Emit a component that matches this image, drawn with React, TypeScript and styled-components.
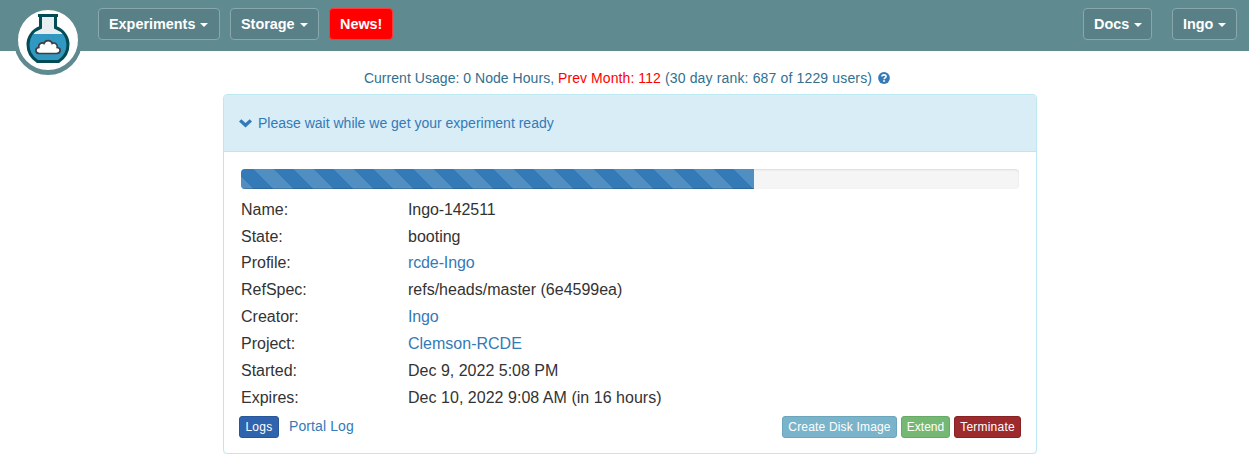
import React from 'react';
import styled, { createGlobalStyle } from 'styled-components';

const GlobalStyle = createGlobalStyle`
  * { box-sizing: border-box; }
  body {
    margin: 0;
    background: #fff;
    color: #333;
    font: 14px/20px "Liberation Sans", Arial, sans-serif;
  }
`;

const Navbar = styled.header`
  height: 51px;
  padding: 8px 12px 0 14px;
  display: flex;
  align-items: flex-start;
  background: #5f8a8f;
`;

const Brand = styled.a`
  flex: none;
  width: 68px;
  height: 68px;
  margin: -2px 16px 0 0;
  border: 4px solid #5f8a8f;
  border-radius: 50%;
  background: #fff;
  display: block;
  box-shadow: 0 1px 0 #5f8a8f;
  svg { display: block; }
`;

const NavGroup = styled.nav<{ $gap: number; $end?: boolean }>`
  display: flex;
  gap: ${p => p.$gap}px;
  margin-left: ${p => (p.$end ? 'auto' : '0')};
`;

const NavButton = styled.button<{ $width: number; $alert?: boolean }>`
  width: ${p => p.$width}px;
  height: 32px;
  padding: 0 0 0 10px;
  display: flex;
  align-items: center;
  border: 1px solid ${p => (p.$alert ? '#ff3a3c' : '#88a8ac')};
  border-radius: 4px;
  background: ${p => (p.$alert ? '#f00' : '#588086')};
  color: #fff;
  font: bold 14.4px/20px "Liberation Sans", Arial, sans-serif;
  white-space: nowrap;
`;

const Caret = styled.span`
  margin: 1px 0 0 5px;
  border-top: 4px solid #fff;
  border-left: 4px solid transparent;
  border-right: 4px solid transparent;
`;

const Usage = styled.p`
  margin: 0;
  padding: 17px 0 0 5px;
  height: 43px;
  display: flex;
  justify-content: center;
  align-items: flex-start;
  color: #31708f;
  white-space: pre;
  svg { margin: 4px 0 0 6px; }
`;

const UsagePart = styled.span<{ $spacing: number; $previous?: boolean }>`
  color: ${p => (p.$previous ? '#f00' : 'inherit')};
  letter-spacing: ${p => p.$spacing}px;
`;

const Panel = styled.main`
  width: 814px;
  height: 360px;
  margin-left: 223px;
  border: 1px solid #bce8f1;
  border-radius: 4px;
  box-shadow: 0 1px 1px rgba(0, 0, 0, 0.05);
`;

const PanelHeader = styled.div`
  height: 57px;
  padding: 0 15px;
  display: flex;
  align-items: center;
  gap: 6px;
  border-bottom: 1px solid #bce8f1;
  border-radius: 3px 3px 0 0;
  background: #d9edf7;
  color: #337ab7;
`;

const PanelBody = styled.div`
  padding: 17px 15px 0;
`;

const Track = styled.div`
  height: 20px;
  margin: 0 2px 7px;
  overflow: hidden;
  border-radius: 4px;
  background: #f5f5f5;
  box-shadow: inset 0 1px 2px rgba(0, 0, 0, 0.1);
`;

const Bar = styled.div`
  width: 513px;
  height: 100%;
  background: #337ab7
    linear-gradient(45deg, rgba(255, 255, 255, 0.15) 25%, transparent 25%, transparent 50%,
      rgba(255, 255, 255, 0.15) 50%, rgba(255, 255, 255, 0.15) 75%, transparent 75%, transparent)
    13px 0 / 40px 40px;
  box-shadow: inset 0 -1px 0 rgba(0, 0, 0, 0.15);
`;

const Details = styled.dl`
  margin: 0 2px;
  display: grid;
  grid-template-columns: 167px 1fr;
  grid-template-rows: 27px 26px repeat(6, 27px);
  font-size: 16px;
  line-height: 27px;
`;

const Term = styled.dt``;

const Value = styled.dd<{ $link?: boolean; $spacing?: number }>`
  margin: 0;
  color: ${p => (p.$link ? '#337ab7' : 'inherit')};
  letter-spacing: ${p => p.$spacing ?? 0}px;
`;

const Actions = styled.div`
  margin-top: 5px;
  display: flex;
  gap: 4px;
`;

const ActionButton = styled.button<{ $bg: string; $border: string; $width: number; $spacing?: number }>`
  width: ${p => p.$width}px;
  height: 22px;
  padding: 0;
  border: 1px solid ${p => p.$border};
  border-radius: 3px;
  background: ${p => p.$bg};
  color: #fff;
  font: 12px/18px "Liberation Sans", Arial, sans-serif;
  letter-spacing: ${p => p.$spacing ?? 0}px;
  white-space: nowrap;
`;

const LogLink = styled.a`
  margin: 0 auto 0 6px;
  color: #337ab7;
  letter-spacing: 0.1px;
`;

const rows: { label: string; value: string; link?: boolean; spacing?: number }[] = [
  { label: 'Name:', value: 'Ingo-142511', spacing: -0.1 },
  { label: 'State:', value: 'booting' },
  { label: 'Profile:', value: 'rcde-Ingo', link: true, spacing: -0.12 },
  { label: 'RefSpec:', value: 'refs/heads/master (6e4599ea)' },
  { label: 'Creator:', value: 'Ingo', link: true, spacing: -0.2 },
  { label: 'Project:', value: 'Clemson-RCDE', link: true },
  { label: 'Started:', value: 'Dec 9, 2022 5:08 PM' },
  { label: 'Expires:', value: 'Dec 10, 2022 9:08 AM (in 16 hours)', spacing: 0.03 },
];

const FlaskLogo = () => (
  <svg width="60" height="60" viewBox="0 0 60 60">
    <path d="M22.500 5.500V17.500C14.500 20.500 10 27 10 34.500C10 42 14 48 19.500 51.500H40.500C46 48 50 42 50 34.500C50 27 45.500 20.500 37.500 17.500V5.500Z" fill="#e8edf0" />
    <path d="M13 24H47C49 27 50 30.500 50 34.500C50 42 46 48 40.500 51.500H19.500C14 48 10 42 10 34.500C10 30.500 11 27 13 24Z" fill="#3199c1" />
    <path d="M20 5.500H40M22.500 6V17.500C14.500 20.500 10 27 10 34.500C10 42 14 48 19.500 51.500H40.500C46 48 50 42 50 34.500C50 27 45.500 20.500 37.500 17.500V6" fill="none" stroke="#034b55" strokeWidth="3" />
    <path d="M21.500 43.500C16.800 43.500 16.800 37.800 20.800 37.500C20 33.500 24 32 26 33.500C27.500 29.500 33 29.700 34.200 33.500C37 32 40 34.500 39.200 37.500C43.500 38 43 43.500 38.500 43.500Z" fill="#fff" stroke="#413c42" strokeWidth="1.700" />
  </svg>
);

const ChevronIcon = () => (
  <svg width="13" height="9" viewBox="0 0 13 9">
    <path d="M0 2.500L2.300 .2L6.500 4L10.700 .2L13 2.500L6.500 8.500Z" fill="#337ab7" />
  </svg>
);

const HelpIcon = () => (
  <svg width="12" height="12" viewBox="0 0 12 12">
    <circle cx="6" cy="6" r="5.900" fill="#337ab7" />
    <path d="M3.900 4.600C3.900 2.300 8.100 2.300 8.100 4.500C8.100 5.900 6.100 5.800 6.100 7.200M5.100 9H7.100" fill="none" stroke="#fff" strokeWidth="1.600" />
  </svg>
);

export default function App() {
  return (
    <>
      <GlobalStyle />
      <Navbar>
        <Brand><FlaskLogo /></Brand>
        <NavGroup $gap={10}>
          <NavButton $width={122}>Experiments<Caret /></NavButton>
          <NavButton $width={89}>Storage<Caret /></NavButton>
          <NavButton $width={64} $alert>News!</NavButton>
        </NavGroup>
        <NavGroup $gap={20} $end>
          <NavButton $width={69}>Docs<Caret /></NavButton>
          <NavButton $width={65}>Ingo<Caret /></NavButton>
        </NavGroup>
      </Navbar>
      <Usage>
        <UsagePart $spacing={0.04}>{'Current Usage: 0 Node Hours, '}</UsagePart>
        <UsagePart $spacing={0.08} $previous>Prev Month: 112</UsagePart>
        <UsagePart $spacing={0.15}>{' (30 day rank: 687 of 1229 users)'}</UsagePart>
        <HelpIcon />
      </Usage>
      <Panel>
        <PanelHeader>
          <ChevronIcon />
          <span>Please wait while we get your experiment ready</span>
        </PanelHeader>
        <PanelBody>
          <Track><Bar /></Track>
          <Details>
            {rows.map(row => (
              <React.Fragment key={row.label}>
                <Term>{row.label}</Term>
                <Value $link={row.link} $spacing={row.spacing}>{row.value}</Value>
              </React.Fragment>
            ))}
          </Details>
          <Actions>
            <ActionButton $bg="#3063ad" $border="#28569a" $width={40} $spacing={0.3}>Logs</ActionButton>
            <LogLink>Portal Log</LogLink>
            <ActionButton $bg="#7ab4ca" $border="#6ba6bd" $width={115} $spacing={0.18}>Create Disk Image</ActionButton>
            <ActionButton $bg="#74b874" $border="#67aa67" $width={49}>Extend</ActionButton>
            <ActionButton $bg="#9d2a2d" $border="#872124" $width={67} $spacing={0.22}>Terminate</ActionButton>
          </Actions>
        </PanelBody>
      </Panel>
    </>
  );
}
